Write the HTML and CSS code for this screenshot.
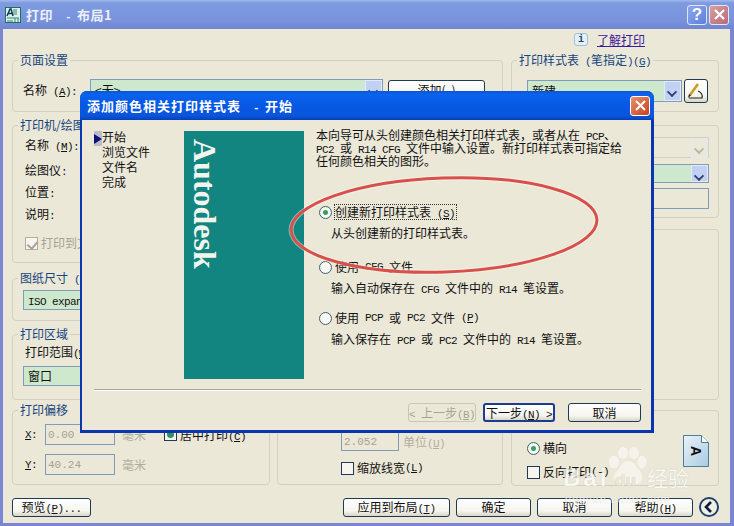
FILE: index.html
```html
<!doctype html>
<html lang="zh">
<head>
  <meta charset="UTF-8">
  <title>打印 - 布局1</title>
  <link rel="stylesheet" href="styles.css">
</head>
<body>
  <div class="desktop">
    <!-- back window -->
    <div class="win">
      <header class="win-title">
        <svg class="app-icon" width="16" height="16" viewBox="0 0 16 16">
          <rect x="0.5" y="0.5" width="15" height="15" fill="#dff0ea" stroke="#1d6f6a"/>
          <path d="M2 9 5 2h1l2 7M3.500 6.500h3.500" fill="none" stroke="#123c58" stroke-width="1.500"/>
          <path d="M9 2v6M11 2v6M2 11h12M2 14h6M10 11v4M13 11v4" stroke="#2c8a70"/>
        </svg>
        <span class="win-name">打印<span class="m">  - </span>布局1</span>
        <span class="cap-btn cap-help">?</span>
        <span class="cap-btn cap-close">
          <svg width="13" height="13" viewBox="0 0 13 13"><path d="M2 2l9 9M11 2l-9 9" stroke="#fff" stroke-width="2.200"/></svg>
        </span>
      </header>

      <div class="client">
        <div class="learn">
          <span class="info-icon">i</span>
          <a href="#" class="learn-link">了解打印</a>
        </div>
        <div class="columns">
          <div class="col-main">
            <fieldset class="group h-page">
              <legend>页面设置</legend>
              <div class="row page-row">
                <label class="lbl w-66">名称<span class="m"> (<u>A</u>):</span></label>
                <div class="combo w-293"><span class="combo-text">&lt;无&gt;</span><span class="arrow"></span></div>
                <button class="btn add-btn">添加(<span class="m">.</span>)</button>
              </div>
            </fieldset>
            <fieldset class="group h-printer">
              <legend>打印机/绘图仪</legend>
              <div class="plain-line first">名称<span class="m"> (<u>M</u>):</span></div>
              <div class="plain-line">绘图仪<span class="m">:</span></div>
              <div class="plain-line">位置<span class="m">:</span></div>
              <div class="plain-line">说明<span class="m">:</span></div>
              <div class="check-line disabled"><span class="check checked"></span>打印到文件</div>
            </fieldset>
            <div class="split">
              <div class="split-left">
                <fieldset class="group h-paper">
                  <legend>图纸尺寸<span class="m"> (<u>Z</u>)</span></legend>
                  <div class="combo w-240 paper-combo"><span class="combo-text"><span class="m">ISO expand A4</span></span></div>
                </fieldset>
                <fieldset class="group h-area">
                  <legend>打印区域</legend>
                  <div class="area-label">打印范围<span class="m">(<u>W</u>):</span></div>
                  <div class="combo w-240 area-combo"><span class="combo-text">窗口</span></div>
                </fieldset>
                <fieldset class="group h-offset">
                  <legend>打印偏移<span class="m">  (</span></legend>
                  <div class="row offset-row first">
                    <span class="axis m"><u>X</u>:</span>
                    <span class="num">0.00</span>
                    <span class="unit">毫米</span>
                    <span class="check center-check checked-green"></span><span>居中打印<span class="m">(<u>C</u>)</span></span>
                  </div>
                  <div class="row offset-row second">
                    <span class="axis m"><u>Y</u>:</span>
                    <span class="num">40.24</span>
                    <span class="unit">毫米</span>
                  </div>
                </fieldset>
              </div>
              <div class="split-right">
                <fieldset class="group h-scale">
                  <div class="row scale-row">
                    <span class="num num-scale">2.052</span>
                    <span class="unit">单位<span class="m">(<u>U</u>)</span></span>
                  </div>
                  <div class="check-line lineweight"><span class="check"></span>缩放线宽<span class="m">(<u>L</u>)</span></div>
                </fieldset>
              </div>
            </div>
          </div>

          <div class="col-side">
            <fieldset class="group h-page">
              <legend>打印样式表<span class="m"> (</span>笔指定<span class="m">)(<u>G</u>)</span></legend>
              <div class="row page-row">
                <div class="combo w-155"><span class="combo-text">新建</span><span class="arrow"></span></div>
                <button class="btn pen-btn">
                  <svg width="18" height="17" viewBox="0 0 18 17">
                    <path d="M3 12 11 1" stroke="#c79a20" stroke-width="2.500"/>
                    <path d="M2 15h13c1-3-1-6-4-7" fill="none" stroke="#222" stroke-width="1.200"/>
                    <path d="M1 15l1-4 2 1.500z" fill="#222"/>
                  </svg>
                </button>
              </div>
            </fieldset>
            <fieldset class="group h-shade">
              <div class="side-field"><span class="arrow arrow-off"></span></div>
              <div class="side-field green"><span class="arrow"></span></div>
              <div class="side-box"></div>
            </fieldset>
            <fieldset class="group h-options"></fieldset>
            <fieldset class="group h-orient">
              <div class="orient">
                <div class="orient-list">
                  <div class="radio-line"><span class="radio on"></span>横向</div>
                  <div class="radio-line"><span class="check"></span>反向打印<span class="m">(-)</span></div>
                </div>
                <svg class="page-icon" width="26" height="32" viewBox="0 0 26 32">
                  <defs>
                    <linearGradient id="pg" x1="0" y1="0" x2="1" y2="1">
                      <stop offset="0" stop-color="#eaf3fa"/>
                      <stop offset="1" stop-color="#a8cbe0"/>
                    </linearGradient>
                  </defs>
                  <path d="M.5.5h18l7 7v24H.5z" fill="url(#pg)" stroke="#4d7d98"/>
                  <path d="M18.500.5v7h7" fill="#fff" stroke="#4d7d98"/>
                  <text x="13" y="21" class="page-a" transform="rotate(90 13 16)">A</text>
                </svg>
              </div>
            </fieldset>
          </div>
        </div>

        <div class="win-actions">
          <button class="btn preview-btn">预览<span class="m">(<u>P</u>)...</span></button>
          <span class="grow"></span>
          <button class="btn apply-btn">应用到布局<span class="m">(<u>T</u>)</span></button>
          <button class="btn act-btn">确定</button>
          <button class="btn act-btn">取消</button>
          <button class="btn act-btn">帮助<span class="m">(<u>H</u>)</span></button>
          <span class="round-btn">
            <svg width="12" height="12" viewBox="0 0 12 12"><path d="M8 1 3 6l5 5" fill="none" stroke="#0c1c40" stroke-width="2.600"/></svg>
          </span>
        </div>
      </div>
    </div>

    <!-- watermark -->
    <div class="watermark">
      <svg class="paw" width="40" height="40" viewBox="0 0 40 40">
        <g fill="#fff" fill-opacity=".75">
          <ellipse cx="7" cy="15" rx="5" ry="6.500"/>
          <ellipse cx="16" cy="6" rx="5" ry="6"/>
          <ellipse cx="27" cy="6" rx="5" ry="6"/>
          <ellipse cx="35" cy="15" rx="4.500" ry="6.500"/>
          <path d="M21 14c6 0 8 6 12 10 4 5 2 13-4 13-3 0-5-1-8-1s-5 1-8 1c-6 0-8-7-4-12 4-4 6-11 12-11z"/>
        </g>
      </svg>
      <div class="wm-line"><span class="wm-bai">Bai</span><span class="wm-du">du</span><span class="wm-cn">经验</span></div>
      <div class="wm-url">jingyan.baidu.com</div>
    </div>

    <!-- front wizard -->
    <div class="wizard">
      <header class="wiz-title">
        <span class="wiz-name">添加颜色相关打印样式表<span class="m">  - </span>开始</span>
        <span class="wiz-close">
          <svg width="13" height="13" viewBox="0 0 13 13"><path d="M2 2l9 9M11 2l-9 9" stroke="#fff" stroke-width="2"/></svg>
        </span>
      </header>
      <div class="wiz-client">
        <div class="wiz-body">
          <ul class="steps">
            <li class="current">开始</li>
            <li>浏览文件</li>
            <li>文件名</li>
            <li>完成</li>
          </ul>
          <div class="brand"><span class="brand-name">Autodesk</span></div>
          <div class="wiz-text">
            <p class="intro">本向导可从头创建颜色相关打印样式表，或者从在<span class="m"> PCP</span>、<br><span class="m">PC2 </span>或<span class="m"> R14 CFG </span>文件中输入设置。新打印样式表可指定给<br>任何颜色相关的图形。</p>
            <div class="opt opt-1">
              <div class="radio-line"><span class="radio on"></span><span class="focus">创建新打印样式表<span class="m"> (<u>S</u>)</span></span></div>
              <p class="desc">从头创建新的打印样式表。</p>
            </div>
            <div class="opt opt-2">
              <div class="radio-line"><span class="radio"></span>使用<span class="m"> CFG </span>文件</div>
              <p class="desc">输入自动保存在<span class="m"> CFG </span>文件中的<span class="m"> R14 </span>笔设置。</p>
            </div>
            <div class="opt opt-3">
              <div class="radio-line"><span class="radio"></span>使用<span class="m"> PCP </span>或<span class="m"> PC2 </span>文件<span class="m"> (<u>P</u>)</span></div>
              <p class="desc">输入保存在<span class="m"> PCP </span>或<span class="m"> PC2 </span>文件中的<span class="m"> R14 </span>笔设置。</p>
            </div>
          </div>
        </div>
        <div class="wiz-rule"></div>
        <div class="wiz-actions">
          <button class="btn btn-off wiz-prev"><span class="m">&lt; </span>上一步<span class="m">(<u>B</u>)</span></button>
          <button class="btn btn-focus wiz-next">下一步<span class="m">(<u>N</u>) &gt;</span></button>
          <button class="btn wiz-cancel">取消</button>
        </div>
      </div>
    </div>

    <!-- hand drawn highlight -->
    <svg class="mark" width="734" height="526" viewBox="0 0 734 526">
      <ellipse cx="444" cy="225" rx="153" ry="47" transform="rotate(-2 444 225)" fill="none" stroke="#fff" stroke-opacity=".45" stroke-width="5"/>
      <ellipse cx="444" cy="225" rx="153" ry="47" transform="rotate(-2 444 225)" fill="none" stroke="#d8504a" stroke-width="3"/>
    </svg>
  </div>
</body>
</html>
```

FILE: styles.css
```css
* {
  box-sizing: border-box;
}
html, body {
  margin: 0;
  padding: 0;
}
body {
  width: 734px;
  height: 526px;
  overflow: hidden;
  font: 12px/14px "Noto Sans CJK SC", "Liberation Sans", sans-serif;
  color: #111;
}
p {
  margin: 0;
}
u {
  text-underline-offset: 1px;
}
.m {
  font-family: "Liberation Mono", monospace;
  font-size: 11px;
  letter-spacing: -.6px;
  line-height: 0;
  white-space: pre;
}
.desktop {
  position: relative;
  width: 734px;
  height: 526px;
  overflow: hidden;
}

/* back window */
.win {
  display: flex;
  flex-direction: column;
  height: 526px;
  background: #7a86d2;
}
.win-title {
  display: flex;
  align-items: center;
  flex: none;
  height: 29px;
  padding: 0 5px 0 5px;
  background: linear-gradient(#a3b8ee 0, #7e9be0 10%, #7893dc 70%, #7086cf 100%);
}
.app-icon {
  flex: none;
  margin-right: 5px;
}
.win-name {
  flex: 1;
  color: #eef1fb;
  font-size: 13px;
  font-weight: bold;
  letter-spacing: .5px;
}
.cap-btn {
  display: flex;
  align-items: center;
  justify-content: center;
  width: 20px;
  height: 20px;
  border: 1px solid #dfe6f8;
  border-radius: 3px;
}
.cap-help {
  margin-right: 2px;
  background: linear-gradient(135deg, #8fa8ee, #5b80da);
  color: #fff;
  font: bold 17px "Liberation Sans", sans-serif;
}
.cap-close {
  background: linear-gradient(135deg, #d8a09c, #b86a78);
}
.client {
  flex: 1;
  margin: 0 4px 3px 3px;
  padding: 0 11px 0 9px;
  background: #ebe8d8;
  display: flex;
  flex-direction: column;
}
.learn {
  display: flex;
  align-items: center;
  justify-content: flex-end;
  height: 23px;
  padding: 0 74px 2px 0;
}
.info-icon {
  display: flex;
  align-items: center;
  justify-content: center;
  width: 14px;
  height: 13px;
  margin-right: 9px;
  border: 1px solid #9cc0d8;
  border-radius: 3px;
  background: #e4f0f6;
  color: #244a6a;
  font: bold 10px "Liberation Mono", monospace;
}
.learn-link {
  color: #3c1a9c;
}
.columns {
  display: flex;
  gap: 8px;
}
.col-main {
  display: flex;
  flex-direction: column;
  gap: 5px;
  width: 491px;
}
.col-side {
  display: flex;
  flex-direction: column;
  width: 208px;
}
.group {
  margin: 0;
  padding: 0 10px;
  min-width: 0;
  border: 1px solid #d3d0bf;
  border-radius: 4px;
}
.group legend {
  margin-left: -5px;
  padding: 0 2px;
  line-height: 16px;
  color: #17457e;
  white-space: pre;
}
.h-page { height: 60px; }
.h-printer { height: 146px; }
.h-paper { height: 51px; }
.h-area { height: 74px; margin-top: 5px; }
.h-offset { height: 83px; margin-top: 2px; }
.h-scale { height: 75px; padding-top: 21px; }
.h-shade { height: 93px; margin-top: 13px; padding: 11px 9px 0 0; }
.h-options { height: 171px; margin-top: 11px; }
.h-orient { height: 76px; margin-top: 10px; padding: 0 9px 0 15px; }
.split {
  display: flex;
  gap: 7px;
  margin-top: 2px;
}
.split-left {
  display: flex;
  flex-direction: column;
  width: 258px;
}
.split-right {
  display: flex;
  flex-direction: column;
  justify-content: flex-end;
  width: 226px;
}
.row {
  display: flex;
  align-items: center;
}
.page-row {
  margin-top: 11px;
}
.lbl {
  flex: none;
}
.w-66 { width: 67px; }
.w-293 { width: 293px; }
.w-155 { width: 155px; margin-left: 5px; }
.w-240 { width: 230px; }
.combo {
  display: flex;
  align-items: center;
  height: 22px;
  border: 1px solid #7f9db9;
  background: #cde8cc;
  padding: 0 0 0 4px;
}
.combo-text {
  flex: 1;
}
.arrow {
  position: relative;
  flex: none;
  width: 17px;
  height: 20px;
  background: #c2d0f4;
  border: 1px solid #e2e9fb;
}
.arrow::after {
  content: "";
  position: absolute;
  left: 3px;
  top: 6px;
  width: 6px;
  height: 6px;
  border: solid #26406e;
  border-width: 0 2px 2px 0;
  transform: rotate(45deg) scale(.9);
}
.arrow-off {
  background: #ebe8d8;
}
.arrow-off::after {
  border-color: #b8b5a4;
}
.btn {
  height: 20px;
  padding: 0;
  border: 1px solid #1e3a56;
  border-radius: 3px;
  background: linear-gradient(#fff 0, #f6f5ef 70%, #d8d6c6 100%);
  font: inherit;
  color: #111;
  white-space: nowrap;
}
.add-btn {
  width: 97px;
  margin-left: 5px;
}
.pen-btn {
  display: flex;
  align-items: center;
  justify-content: center;
  width: 24px;
  height: 24px;
  margin-left: 2px;
}
.plain-line {
  height: 22px;
  line-height: 14px;
  margin-left: 2px;
}
.plain-line.first {
  margin-top: 5px;
  height: 25px;
}
.check-line {
  display: flex;
  align-items: center;
  margin-left: 2px;
}
.check-line.disabled {
  margin-top: 7px;
  color: #a5a394;
}
.check {
  flex: none;
  width: 13px;
  height: 13px;
  margin-right: 3px;
  border: 1px solid #1e3a56;
  background: #f6f5ef;
}
.checked {
  position: relative;
  border-color: #b0ae9e;
}
.checked::after {
  content: "";
  position: absolute;
  left: 3px;
  top: 1px;
  width: 5px;
  height: 8px;
  border: solid #a5a394;
  border-width: 0 2px 2px 0;
  transform: rotate(40deg);
}
.checked-green {
  background: radial-gradient(circle, #2f8f60 0 3px, #f6f5ef 4px);
}
.paper-combo {
  margin-top: 4px;
  height: 20px;
}
.area-label {
  margin: 2px 0 6px 2px;
  line-height: 16px;
}
.area-combo {
  height: 20px;
}
.axis {
  width: 20px;
  margin-left: 2px;
}
.num {
  display: block;
  width: 70px;
  height: 21px;
  padding: 3px 2px;
  border: 1px solid #7f9db9;
  color: #a5a394;
  font-family: "Liberation Mono", monospace;
  font-size: 11px;
}
.unit {
  margin-left: 7px;
  color: #b0ae9e;
}
.center-check {
  margin-left: 18px;
}
.offset-row.first {
  margin-top: 6px;
}
.offset-row.second {
  margin-top: 9px;
}
.num-scale {
  flex: none;
  width: 58px;
  height: 19px;
  padding: 2px;
  margin-left: 53px;
}
.scale-row .unit {
  margin-left: 4px;
}
.lineweight {
  margin: 10px 0 0 53px;
}
.side-field {
  display: flex;
  justify-content: flex-end;
  height: 21px;
  margin-left: 20px;
  border: 1px solid #d3d0bf;
  background: #ebe8d8;
}
.side-field.green {
  margin-top: 6px;
  height: 19px;
  border-color: #7f9db9;
  background: #cde8cc;
}
.side-field.green .arrow {
  height: 17px;
}
.side-box {
  height: 21px;
  margin: 5px 0 0 20px;
  border: 1px solid #7f9db9;
}
.orient {
  display: flex;
  justify-content: space-between;
  margin-top: 21px;
}
.orient-list {
  display: flex;
  flex-direction: column;
  gap: 10px;
  padding-top: 9px;
}
.page-icon {
  flex: none;
  margin-top: 3px;
}
.page-a {
  font: bold 14px "Liberation Sans", sans-serif;
  fill: #111;
  text-anchor: middle;
}
.radio-line {
  display: flex;
  align-items: center;
  height: 14px;
  white-space: pre;
}
.radio {
  flex: none;
  width: 13px;
  height: 13px;
  margin-right: 3px;
  border: 1px solid #3b5f7f;
  border-radius: 50%;
  background: #f8f7f0;
}
.radio.on {
  background: radial-gradient(circle, #2fa45f 0 2px, #f8f7f0 3px);
}
.win-actions {
  display: flex;
  align-items: center;
  gap: 6px;
  margin-top: 11px;
}
.win-actions .btn {
  height: 19px;
}
.preview-btn {
  width: 79px;
}
.grow {
  flex: 1;
}
.apply-btn {
  width: 107px;
}
.act-btn {
  width: 75px;
}
.round-btn {
  display: flex;
  align-items: center;
  justify-content: center;
  width: 20px;
  height: 20px;
  border: 2px solid #20406c;
  border-radius: 50%;
  background: #f0efe4;
}

/* watermark */
.watermark {
  position: absolute;
  left: 563px;
  top: 447px;
  width: 130px;
  height: 60px;
  color: #fff;
  opacity: .7;
}
.paw {
  position: absolute;
  left: 44px;
  top: 0;
}
.wm-line {
  position: absolute;
  left: 0;
  top: 18px;
  display: flex;
  align-items: baseline;
  font: bold 24px/24px "Liberation Sans", sans-serif;
  text-shadow: 0 0 1px #b5b3a6;
}
.wm-bai {
  width: 52px;
  letter-spacing: 3px;
}
.wm-du {
  width: 32px;
  font-size: 17px;
  color: #ebe8d8;
}
.wm-cn {
  font: 21px/24px "Noto Sans CJK SC", sans-serif;
}
.wm-url {
  position: absolute;
  left: 2px;
  top: 46px;
  font: 11px/12px "Liberation Sans", sans-serif;
  letter-spacing: 1px;
  text-shadow: 0 0 1px #b5b3a6;
}

/* wizard */
.wizard {
  position: absolute;
  left: 80px;
  top: 91px;
  width: 574px;
  height: 342px;
  display: flex;
  flex-direction: column;
  background: #0a35b0;
  border-radius: 7px 7px 0 0;
}
.wiz-title {
  display: flex;
  align-items: center;
  flex: none;
  height: 29px;
  padding: 0 4px 0 7px;
  border-radius: 7px 7px 0 0;
  background: linear-gradient(#0a56d6 0, #0a62ee 12%, #0758e4 50%, #0a55dc 85%, #0740b8 100%);
}
.wiz-name {
  flex: 1;
  color: #fff;
  font-size: 13px;
  font-weight: bold;
  letter-spacing: 1px;
  white-space: pre;
}
.wiz-close {
  display: flex;
  align-items: center;
  justify-content: center;
  width: 20px;
  height: 20px;
  border: 1px solid #fff;
  border-radius: 3px;
  background: linear-gradient(135deg, #e8906c, #c8401c);
}
.wiz-client {
  flex: 1;
  margin: 0 3px 3px 2px;
  padding: 11px 10px 0 12px;
  background: #ebe8d8;
}
.wiz-body {
  display: flex;
  height: 248px;
}
.steps {
  width: 90px;
  margin: 0;
  padding: 0;
  list-style: none;
  line-height: 15px;
}
.steps li {
  padding-left: 8px;
}
.steps .current {
  position: relative;
  margin-top: -2px;
}
.steps .current::before {
  content: "";
  position: absolute;
  left: 0;
  top: 2px;
  width: 8px;
  height: 15px;
  background: #bdbcc8;
}
.steps .current::after {
  content: "";
  position: absolute;
  left: 0;
  top: 5px;
  border: solid transparent;
  border-width: 5px 0 5px 8px;
  border-left-color: #10107c;
}
.brand {
  flex: none;
  width: 120px;
  padding: 8px 0 0 0;
  background: #138580;
}
.brand-name {
  display: block;
  writing-mode: vertical-rl;
  margin-left: 1px;
  color: #f2f4ee;
  font: bold 32px/40px "Liberation Serif", serif;
}
.wiz-text {
  flex: 1;
  padding-left: 12px;
}
.intro {
  margin-top: -3px;
  line-height: 13px;
  white-space: pre;
}
.opt {
  margin-left: 3px;
}
.opt-1 { margin-top: 38px; }
.opt-2 { margin-top: 20px; }
.opt-3 { margin-top: 16px; }
.focus {
  outline: 1px dotted #333;
  padding-right: 1px;
}
.desc {
  margin: 7px 0 0 12px;
  white-space: pre;
}
.wiz-rule {
  margin: 10px 0 0 0;
  height: 2px;
  border-top: 1px solid #aca899;
  border-bottom: 1px solid #fff;
}
.wiz-actions {
  display: flex;
  justify-content: flex-end;
  margin-top: 12px;
}
.wiz-actions .btn {
  height: 19px;
}
.wiz-prev {
  width: 68px;
}
.btn-off {
  border-color: #c8c6b6;
  background: #ebe8d8;
  color: #a5a394;
}
.wiz-next {
  width: 72px;
  margin-left: 7px;
}
.btn-focus {
  border: 2px solid #1c3c94;
  border-radius: 3px;
}
.wiz-cancel {
  width: 73px;
  margin-left: 13px;
}

/* red ellipse on top of everything */
.mark {
  position: absolute;
  left: 0;
  top: 0;
}
```
